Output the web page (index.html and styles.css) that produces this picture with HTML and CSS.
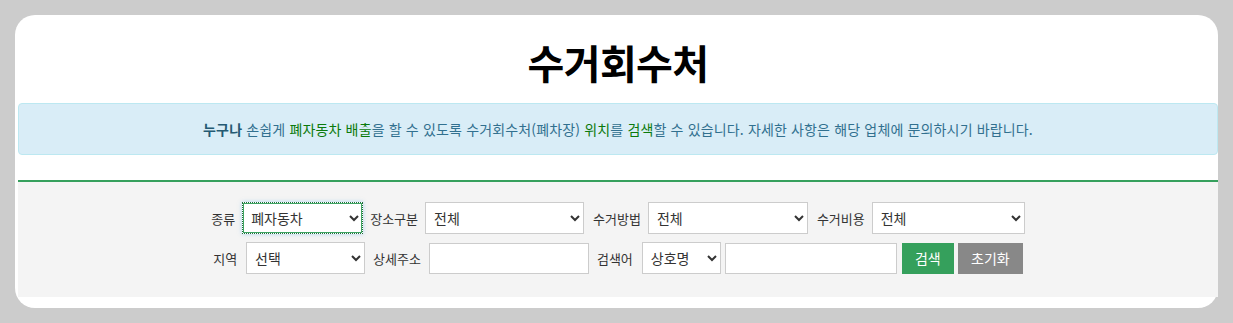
FILE: index.html
```html
<!DOCTYPE html>
<html lang="ko">
<head>
<meta charset="utf-8">
<title>수거회수처</title>
<link rel="stylesheet" href="styles.css">
</head>
<body>
<div class="card">
  <h1 class="title">수거회수처</h1>
  <div class="alert">
    <span class="b">누구나</span> 손쉽게 <span class="g">폐자동차 배출</span>을 할 수 있도록 수거회수처(폐차장) <span class="g">위치</span>를 <span class="g">검색</span>할 수 있습니다. 자세한 사항은 해당 업체에 문의하시기 바랍니다.
  </div>
  <div class="search">
    <div class="row">
      <label class="lbl">종류</label>
      <select class="sel w121 focus"><option>폐자동차</option></select>
      <label class="lbl">장소구분</label>
      <select class="sel w159"><option>전체</option></select>
      <label class="lbl ml2">수거방법</label>
      <select class="sel w160"><option>전체</option></select>
      <label class="lbl ml2">수거비용</label>
      <select class="sel w153"><option>전체</option></select>
    </div>
    <div class="row row2">
      <label class="lbl">지역</label>
      <select class="sel w119 ml2"><option>선택</option></select>
      <label class="lbl ml1">상세주소</label>
      <input class="inp w160 ml1" type="text">
      <label class="lbl ml1">검색어</label>
      <select class="sel w79 ml2"><option>상호명</option></select>
      <input class="inp w172 mlm3" type="text">
      <button class="btn green mlm2">검색</button>
      <button class="btn gray mlm3">초기화</button>
    </div>
  </div>
</div>
</body>
</html>
```
FILE: styles.css
```css
html, body {
  margin: 0;
  padding: 0;
  background: #cccccc;
}
body {
  font-family: "Noto Sans CJK KR", "Noto Sans", sans-serif;
  color: #333;
}
.card {
  margin: 15px 0 0 15px;
  width: 1200px;
  padding: 0 0 11px 3px;
  background: #fff;
  border-radius: 20px;
}
.title {
  margin: 0;
  display: flex;
  align-items: center;
  justify-content: center;
  padding-top: 6px;
  height: 82px;
  line-height: 1;
  font-size: 40px;
  font-weight: bold;
  color: #000;
  letter-spacing: -0.6px;
}
.alert {
  height: 50px;
  line-height: 50px;
  background: #d9edf7;
  border: 1px solid #bce8f1;
  border-radius: 4px;
  color: #31708f;
  font-size: 14px;
  text-align: center;
  letter-spacing: 0.15px;
}
.alert .b { color: #245a73; font-weight: 600; }
.alert .g { color: #0b7a0b; }
.search {
  margin-top: 25px;
  border-top: 2px solid #36a05d;
  background: #f4f4f4;
  padding: 20px 0 23px;
  display: flex;
  flex-direction: column;
  gap: 8px;
}
.row {
  display: flex;
  justify-content: center;
  align-items: center;
  gap: 7px;
}
.lbl {
  font-size: 13px;
  color: #333;
}
.sel, .inp {
  box-sizing: border-box;
  height: 32px;
  border: 1px solid #cccccc;
  background: #fff;
  font-family: inherit;
  font-size: 14px;
  color: #333;
  padding: 0 4px;
  border-radius: 0;
  margin: 0;
}
.inp { height: 31px; }
.focus {
  border: 1px dotted #1f6e3a;
  outline: 1px solid #3fa463;
  outline-offset: -2px;
  box-shadow: 0 0 4px rgba(102, 175, 233, 0.5);
}
.w121 { width: 121px; }
.w159 { width: 159px; }
.w160 { width: 160px; }
.w153 { width: 153px; }
.w119 { width: 119px; }
.w79 { width: 79px; }
.w172 { width: 172px; }
.ml1 { margin-left: 1px; }
.ml2 { margin-left: 2px; }
.mlm2 { margin-left: -2px; }
.mlm3 { margin-left: -3px; }
.btn {
  height: 31px;
  border: none;
  color: #fff;
  font-family: inherit;
  font-size: 14px;
  padding: 0;
  cursor: pointer;
}
.green { background: #35a05c; width: 52px; }
.gray { background: #888888; width: 65px; }
```
